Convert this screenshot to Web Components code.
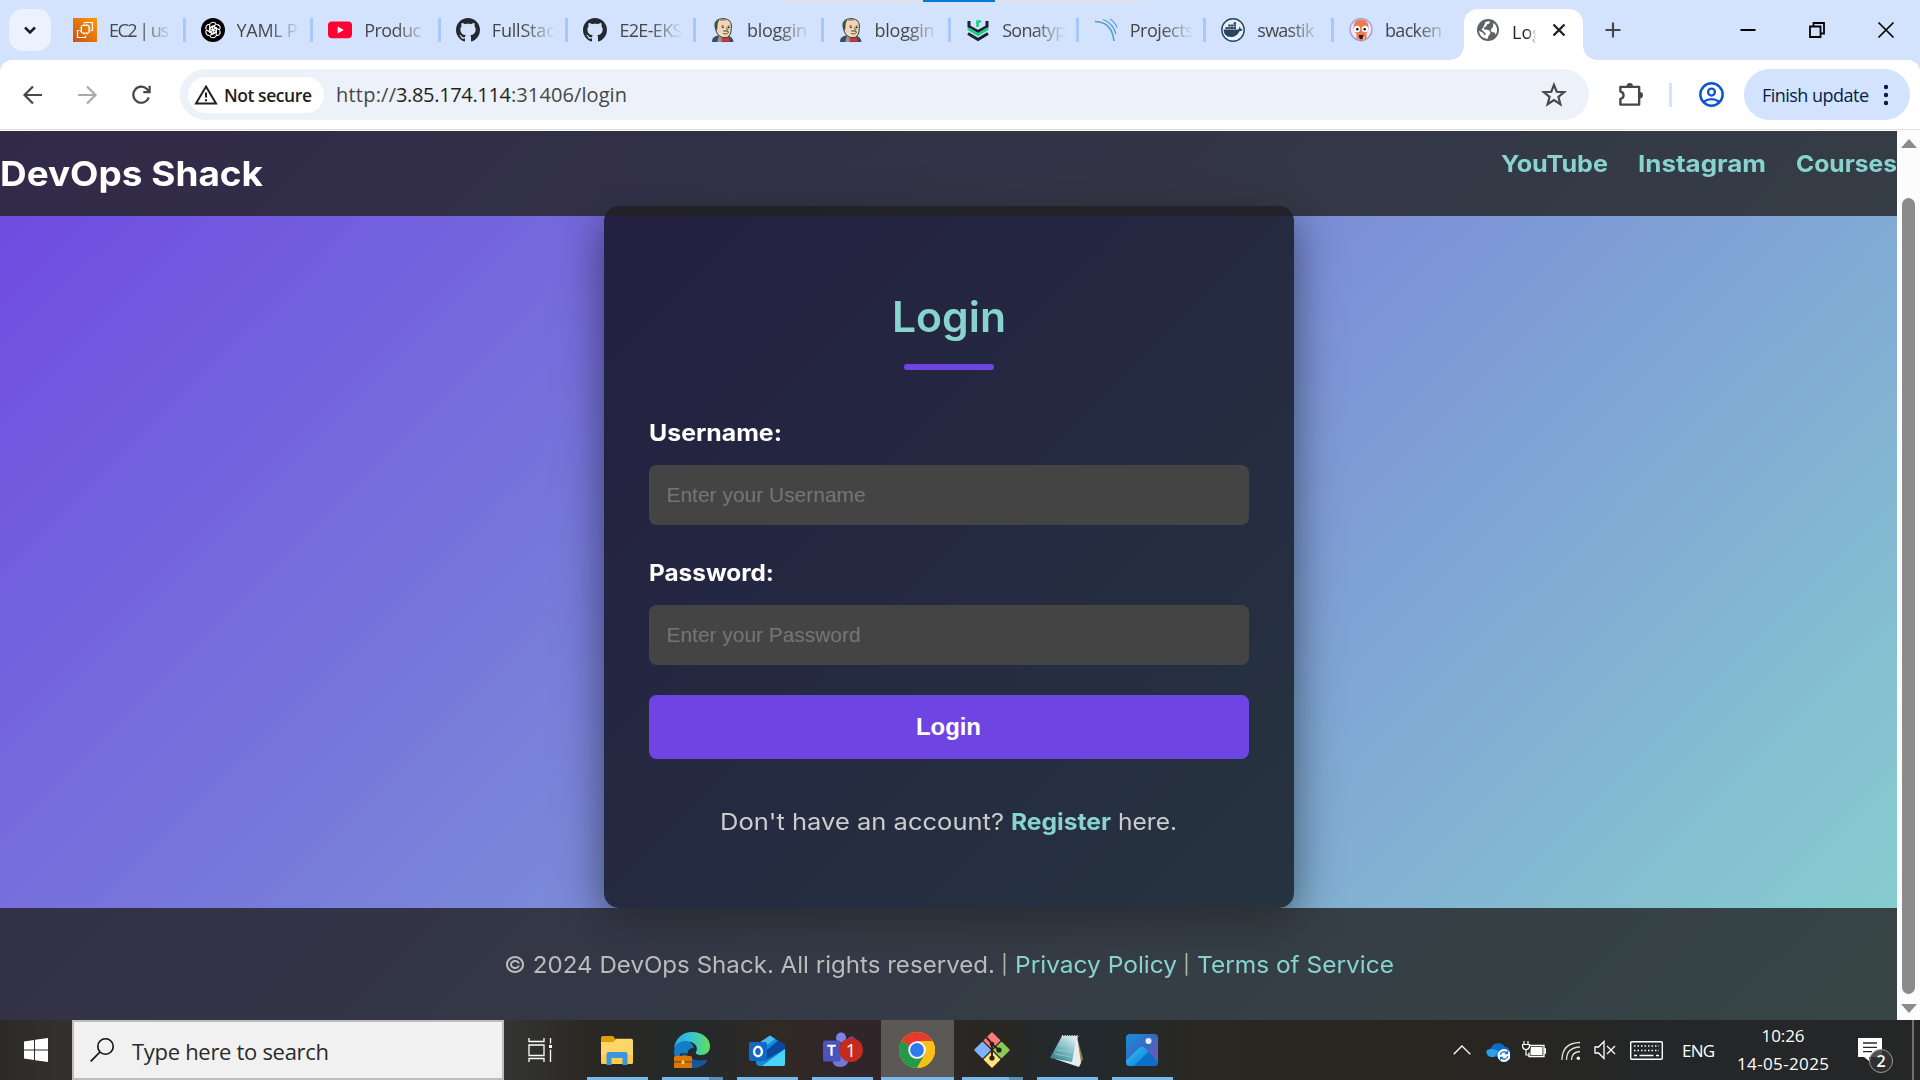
<!DOCTYPE html>
<html lang="en">
<head>
<meta charset="utf-8">
<title>Login</title>
<style>
html,body{margin:0;height:100%;overflow:hidden;background:#fff}
body{font-family:"Open Sans","Noto Sans",sans-serif}
</style>
</head>
<body>
<desktop-screen></desktop-screen>
<script>
const ICONS = {
down:['0 0 24 24','<path d="M6 9l6 6 6-6" fill="none" stroke="#1f1f1f" stroke-width="3"/>'],
ec2:['0 0 24 24','<defs><linearGradient id="g" x1="0" y1="1" x2="1" y2="0"><stop stop-color="#c8511b"/><stop offset="1" stop-color="#f90"/></linearGradient></defs><path fill="url(#g)" d="M0 0h24v24H0z"/><g fill="none" stroke="#fff" stroke-width="1.2"><rect x="8.500" y="7.500" width="7.500" height="7.500" rx="1"/><path d="M11 7.500V6M13.800 7.500V6M11 15v1.500M13.800 15v1.500M8.500 10H7M8.500 12.800H7M16 10h1.500M16 12.800h1.500M11.500 5.500v-1h8v8h-1.500M6.500 12.500h-2v7h8v-2"/></g>'],
gpt:['0 0 24 24','<circle cx="12" cy="12" r="12"/><g fill="none" stroke="#fff" stroke-width="1.150"><path d="M12 8.200l3.400 2v4.300M9.300 5.800a3.300 3.300 0 0 1 5.900.6l-3.600 2.100v4"/><path d="M12 8.200l3.400 2v4.300M9.300 5.800a3.300 3.300 0 0 1 5.900.6l-3.600 2.100v4" transform="rotate(60 12 12)"/><path d="M12 8.200l3.400 2v4.300M9.300 5.800a3.300 3.300 0 0 1 5.900.6l-3.600 2.100v4" transform="rotate(120 12 12)"/><path d="M12 8.200l3.400 2v4.300M9.300 5.800a3.300 3.300 0 0 1 5.900.6l-3.600 2.100v4" transform="rotate(180 12 12)"/><path d="M12 8.200l3.400 2v4.300M9.300 5.800a3.300 3.300 0 0 1 5.900.6l-3.600 2.100v4" transform="rotate(240 12 12)"/><path d="M12 8.200l3.400 2v4.300M9.300 5.800a3.300 3.300 0 0 1 5.900.6l-3.600 2.100v4" transform="rotate(300 12 12)"/></g>'],
yt:['0 0 24 24','<rect y="3.500" width="24" height="16.800" rx="4" fill="#ff0033"/><path d="M9.700 8.400v7l6-3.500z" fill="#fff"/>'],
gh:['0 0 16 16','<path fill="#24292f" d="M8 0C3.580 0 0 3.580 0 8c0 3.540 2.290 6.530 5.470 7.590.4.070.550-.170.550-.380 0-.190-.010-.820-.010-1.490-2.010.370-2.530-.490-2.690-.940-.090-.230-.480-.940-.820-1.130-.280-.150-.680-.520-.010-.530.630-.010 1.080.580 1.230.820.720 1.210 1.870.870 2.330.660.070-.520.280-.870.510-1.070-1.780-.2-3.640-.890-3.640-3.950 0-.870.310-1.590.820-2.150-.080-.2-.360-1.020.080-2.120 0 0 .670-.210 2.200.820.640-.180 1.320-.270 2-.270s1.360.090 2 .270c1.530-1.040 2.200-.820 2.200-.820.440 1.100.160 1.920.080 2.120.510.560.820 1.270.820 2.150 0 3.070-1.870 3.750-3.650 3.950.290.250.540.730.540 1.480 0 1.070-.010 1.930-.010 2.200 0 .210.150.460.550.380A8.010 8.010 0 0 0 16 8c0-4.420-3.580-8-8-8z"/>'],
jenkins:['0 0 24 24','<path d="M1 24c0-3 1-5 4-6l4-1 9 1c3 1 4 3 4.500 6z" fill="#335061"/><path d="M5.500 14L4 8Q3 1 12 .6q8 0 8.500 7.500l-.6 6q-1 5-5 5.500-7 .5-9.400-5.600z" fill="#f0d6b7" stroke="#3b3b3b" stroke-width="1"/><path d="M4.700 13Q1.500 3.500 8.500 1.400l-1.800 4-.4 5.600z" fill="#49494a"/><path d="M9.500 2.300q3-1 5 0M10 8.300q1.500-1.400 3 0M16.500 8.300q1.300-1 2.600 0M15.500 9l1 3M12 15.500q3 1.500 6-1" stroke="#555" stroke-width=".9" fill="none"/><path d="M12.500 13.300q2.500-1.400 5 .4" stroke="#6d6b6d" stroke-width="1.500" fill="none"/><circle cx="11.900" cy="9.500" r=".8"/><circle cx="17.700" cy="9.500" r=".8"/><path d="M8 18l5 3-2 3H6z" fill="#f7e4cd" opacity=".5"/><path d="M10.500 19l3.500 1.500 4-1.500v5l-4-1.300-3.500 1.300z" fill="#d33833"/>'],
sona:['0 0 24 24','<g fill="none" stroke-width="3"><path d="M3 3v5.500l9 5 9-5V3" stroke="#1b1f33"/><path d="M2 10.500l10 6 10-6" stroke="#1ccf7f"/><path d="M2 15.500l10 6 10-6" stroke="#1b1f33"/><path d="M11.500 9V3.500h3.500" stroke="#1ccf7f" stroke-width="2.600"/></g>'],
sonar:['0 0 24 24','<g fill="none" stroke="#549dd0"><path d="M1 3.500Q18 4 20 23" stroke-width="1.700"/><path d="M9 1.500Q19 5 22 16" stroke-width="1.300"/><path d="M16 1Q21 4 23 9.500" stroke-width="1.100"/></g>'],
docker:['0 0 24 24','<circle cx="12" cy="12" r="11.200" fill="#e9f0fb" stroke="#24475d" stroke-width="1.400"/><path fill="#24475d" d="M2.500 11.500h15q1-1 .8-3 1.500 1 1.500 2.500 1 0 2 .4-1 1.900-3.300 1.800Q15.500 19.300 9.500 19 3 18.600 2.500 11.500z"/><path fill="#24475d" d="M4.500 9h2.400v2H4.500zM7.200 9h2.400v2H7.200zM9.900 9h2.400v2H9.900zM12.600 9H15v2h-2.400zM7.200 6.600h2.400v2H7.200zM9.900 6.600h2.400v2H9.900zM12.600 6.600H15v2h-2.400zM12.600 4.200H15v2h-2.400z"/>'],
argo:['0 0 24 24','<circle cx="12" cy="11.500" r="11" fill="#e8eafb" stroke="#a79ad9" stroke-width="1.300"/><path d="M4.500 9.500q0-8 7.500-8t7.500 8q0 4-2 6v5q-1 3-2.200 1v-3h-1v4q-1.800 2-3.600 0v-4h-1v3q-1.200 2-2.200-1v-5q-3-2-3-6z" fill="#ef7b4d"/><circle cx="8" cy="11" r="3.200" fill="#fff"/><circle cx="16" cy="11" r="3.200" fill="#fff"/><circle cx="8.300" cy="11.200" r="1.200"/><circle cx="15.700" cy="11.200" r="1.200"/><path d="M9.500 17h5l-1 4h-3z" fill="#1d1d2b"/>'],
globe:['0 0 24 24','<circle cx="12" cy="12" r="11" fill="#5f6368"/><path fill="#fff" d="M14 3.300c-.3 2.200-1 2.700-3 3-.4 1.900-.9 2.700-2.900 2.900v2.300c4.600 0 6.400 1 6.200 3.700-.2 1.600-2.400 1.600-2.300 5.500C6 20.700 3.300 17 3.100 12.500c2.500 2.200 4.400 1.900 4.900 4 .6 1.200 1.600.7 1.900-.8L5.500 11.500C7 11 9 5.500 9.500 3.800zM17.500 5c2.200 1.500 3.500 4 3.500 7 0 1.800-.5 3.500-1.400 4.900-.2-1.800-.9-2.500-2.400-2.600-1.700-.1-2.400-.9-2.300-2.500.2-1.800 1.800-1.600 2-3.100z"/>'],
x:['0 0 24 24','<path d="M6.500 6.500l11 11m0-11l-11 11" stroke="#1f1f1f" stroke-width="2.300"/>'],
plus:['0 0 24 24','<path d="M12 4.500v15M4.500 12h15" stroke="#474747" stroke-width="2.200"/>'],
min:['0 0 24 24','<path d="M4.500 12h15" stroke="#000" stroke-width="2"/>'],
restore:['0 0 24 24','<path d="M5 8.500h10.500V19H5zM8.500 8.500V5H19v10.500h-3.500" stroke="#000" stroke-width="1.800" fill="none"/>'],
close:['0 0 24 24','<path d="M4.500 4.500l15 15m0-15l-15 15" stroke="#000" stroke-width="1.700"/>'],
back:['0 0 24 24','<path d="M21 12H4M12 3.500L3.500 12l8.500 8.500" stroke="#474747" stroke-width="2.200" fill="none"/>'],
fwd:['0 0 24 24','<path d="M3 12h17M12 3.500l8.500 8.500-8.500 8.500" stroke="#ababab" stroke-width="2.200" fill="none"/>'],
reload:['0 0 24 24','<path d="M19.800 14.500a8 8 0 1 1-1.700-8.300L20.500 8.600M20.600 2.800v6.300h-6.300" stroke="#474747" stroke-width="2.200" fill="none"/>'],
warn:['0 0 24 24','<path d="M12 3.600L22 20.500H2z" stroke="#1f1f1f" stroke-width="2" fill="none"/><path d="M12 9.500v5m0 1.700v2" stroke="#1f1f1f" stroke-width="2"/>'],
star:['0 0 24 24','<path d="M12 2.600l2.500 6.400 6.900.4-5.300 4.400 1.800 6.700L12 16.700l-5.900 3.800 1.800-6.700-5.300-4.400 6.900-.4z" stroke="#474747" stroke-width="2" fill="none"/>'],
ext:['0 0 24 24','<path d="M2.300 4.700h18v17h-18v-5.500q3-.5 3-3.500t-3-3.500z" fill="none" stroke="#474747" stroke-width="2.300" stroke-linejoin="round"/><path d="M8.300 4a3 3 0 0 1 6 0zM21 9.700a3 3 0 0 1 0 6z" fill="#474747"/>'],
user:['0 0 24 24','<circle cx="12" cy="12" r="10.700" fill="none" stroke="#0b57d0" stroke-width="2.400"/><circle cx="12" cy="9.700" r="3.300" fill="none" stroke="#0b57d0" stroke-width="2.200"/><path d="M4.500 19q7.500-5 15 0" fill="none" stroke="#0b57d0" stroke-width="2.200"/>'],
dots:['0 0 6 24','<g fill="#041e49"><circle cx="3" cy="4" r="2.200"/><circle cx="3" cy="12" r="2.200"/><circle cx="3" cy="20" r="2.200"/></g>'],
win:['0 0 24 24','<path fill="#fff" d="M0 3.500l10-1.500v9.400H0zM11 1.800L24 0v11.400H11zM0 12.500h10V22L0 20.500zM11 12.500h13V24l-13-1.800z"/>'],
search:['0 0 24 24','<circle cx="15.500" cy="8.500" r="7.700" fill="none" stroke="#111" stroke-width="1.600"/><path d="M10 14L.7 23.300" stroke="#111" stroke-width="1.700"/>'],
task:['0 0 24 24','<path d="M1 0v3.500h15V0M1 24v-3.500h15V24M1 7h15v10.500H1zM22.500 0v5.500M22.500 11.500V24" fill="none" stroke="#fff" stroke-width="1.300"/><path d="M21 7h3v3h-3z" fill="#fff"/>'],
folder:['0 0 36 36','<path d="M2 6q0-2 2-2h10l2.500 3-2.500 4H2z" fill="#e09c0b"/><path d="M2 10h12l3-3.300h15q2 0 2 2V30q0 2-2 2H4q-2 0-2-2z" fill="#ffd667"/><path d="M2 23h32v7q0 2-2 2H4q-2 0-2-2z" fill="#ffcb4a"/><path d="M7.500 33V22q0-2 2-2h17q2 0 2 2v11h-5v-7h-11v7z" fill="#3b97dd"/>'],
edge:['0 0 36 36','<defs><linearGradient id="a"><stop stop-color="#2ba8e4"/><stop offset=".5" stop-color="#34c6d2"/><stop offset="1" stop-color="#65e054"/></linearGradient></defs><path d="M0 17C1 6 9 0 18 0c11 0 18 7 18 14 0 6-4 9-9 9-4 0-6-1.500-5-3 2-3 1-8-5-10C9 8 2 11 0 17z" fill="url(#a)"/><path d="M0 19C1 12 7 8 13 9.500c5 1 7 4 6.500 7-5-1-7 4-5 9C17 32 24 33 33 29 28 36 19 37 12 35 5 32 0 27 0 19z" fill="#137dc8"/><path d="M14.500 22c1 5 8 8 19 5.500C29 34 23 37 17 36z" fill="#17559f"/><path d="M7 24v-2h7v2" stroke="#54250a" stroke-width="1.600" fill="none"/><rect y="24" width="18" height="12" rx="1.500" fill="#d87909"/><path d="M0 29h18v1.600H0z" fill="#985007"/><path d="M7.700 28.500h2.600v3.500H7.700z" fill="#ffd33b"/>'],
outlook:['0 0 36 36','<path d="M7 13L21 3.500 36 13v19q0 2-2 2H11q-4 0-4-4z" fill="#168bd8"/><path d="M7 13L21 3.500l5 3.500L9 20z" fill="#45bceb"/><path d="M13 22L29 8.500 36 13v4L17 28z" fill="#0b479e"/><path d="M36 17v15q0 2-2 2H13z" fill="#4bd4f9"/><rect y="10" width="18" height="19" rx="2" fill="#1268c4"/><ellipse cx="9" cy="19.500" rx="3.900" ry="4.700" fill="none" stroke="#fff" stroke-width="2.400"/>'],
teams:['0 0 40 40','<circle cx="19" cy="7" r="5.300" fill="#7b83eb"/><circle cx="30" cy="9.500" r="3.800" fill="#5059c9"/><path d="M24 16h11v10q0 6-6 6h-5z" fill="#5059c9"/><path d="M10 16h17v14q-1 8-9 8t-8-8z" fill="#7276d8"/><rect y="10" width="18.500" height="22" rx="2" fill="#4b53bc"/><path d="M4.500 15.500h9M9 15v11" stroke="#fff" stroke-width="2.300"/>'],
chrome:['0 0 36 36','<circle cx="18" cy="18" r="18" fill="#fbc016"/><path d="M18 18L2.400 9A18 18 0 0 1 33.600 9z" fill="#e33b2e"/><path d="M2.400 9A18 18 0 0 0 18 36l7.800-13.500L18 18z" fill="#229a48"/><path d="M18 9h15.600A18 18 0 0 1 18 36l7.800-13.500z" fill="#fbc016"/><circle cx="18" cy="18" r="8.700" fill="#fff"/><circle cx="18" cy="18" r="6.900" fill="#2f7af0"/>'],
git:['0 0 36 36','<g stroke-width="1.600" stroke-linejoin="round"><path d="M18 1l7.500 7.500L18 16l-7.500-7.500z" fill="#ff7b7b" stroke="#ff7b7b"/><path d="M35 18l-7.500 7.500L20 18l7.500-7.500z" fill="#8acb56" stroke="#8acb56"/><path d="M18 35l-7.500-7.500L18 20l7.500 7.500z" fill="#ffe27a" stroke="#ffe27a"/><path d="M1 18l7.500-7.500L16 18l-7.500 7.500z" fill="#80b3ff" stroke="#80b3ff"/></g><path d="M12.500 5.500l5.500 6v15M18 12l7 6" stroke="#2a2119" stroke-width="1.900" fill="none"/><circle cx="18" cy="12" r="2.300" fill="#2a2119"/><circle cx="25" cy="18" r="2.600" fill="#2a2119"/><circle cx="18" cy="26" r="2.600" fill="#2a2119"/>'],
note:['0 0 36 36','<path d="M28 5l6 22-3 5-5-3z" fill="#a77a3f"/><path d="M28 4l4 27-2 4L6 27z" fill="#e7edef"/><defs><linearGradient id="n" x1="0" y1="1" x2=".8" y2="0"><stop stop-color="#2b707d"/><stop offset=".5" stop-color="#6fb3bd"/><stop offset="1" stop-color="#dceff1"/></linearGradient></defs><path d="M13 4h15l-5 26-22-4z" fill="url(#n)"/><path d="M13 4.500h17" stroke="#ddd" stroke-width="3" stroke-dasharray="1.200 1.200"/><path d="M10 13l14 1M8 18l15 2M6 22l16 3" stroke="#a6d2d8" stroke-width=".7"/>'],
photos:['0 0 36 36','<defs><linearGradient id="h" x1="0" y1="0" x2="1" y2="1"><stop stop-color="#1590df"/><stop offset=".5" stop-color="#3869be"/><stop offset="1" stop-color="#8c50b4"/></linearGradient><linearGradient id="i" x1="0" y1="0" x2="1" y2="1"><stop stop-color="#36c8f6"/><stop offset="1" stop-color="#0c74d4"/></linearGradient></defs><rect x="2" y="2" width="32" height="32" rx="4" fill="url(#h)"/><path d="M5 31L15 16.500q3-2.500 6 0l13 12.700V30q0 4-4 4H6q-4 0-4-4z" fill="#0a6ecb"/><path d="M2 28.500L15 16q3-2.500 6 0l3.500 3.500L10 34H6q-4 0-4-4z" fill="url(#i)"/><circle cx="24.500" cy="9" r="3" fill="#e7edfb"/>'],
chev:['0 0 18 10','<path d="M.7 9.300L9 1l8.300 8.300" fill="none" stroke="#fff" stroke-width="1.300"/>'],
cloud:['0 0 24 21','<path d="M5 16a5 5 0 0 1 0-9 8 8 0 0 1 14-1 5 5 0 0 1 3 9z" fill="#0f6cc4"/><path d="M1 9q7-3 12 2l-5 5H5Q0 15 .5 10z" fill="#2f9fe9"/><circle cx="18" cy="14.500" r="6.500" fill="#fff"/><path d="M14.300 14a3.800 3.800 0 0 1 6.800-1.700M21.700 15a3.800 3.800 0 0 1-6.800 1.700M21.500 10v2.600h-2.600M14.500 19v-2.600h2.600" fill="none" stroke="#1878cf" stroke-width="1.300"/>'],
batt:['0 0 24 18','<path d="M8 4.500h14v11H7v-4M22.500 8h1v4h-1" fill="none" stroke="#fff" stroke-width="1.300"/><path d="M9 6h11.500v8H8.500V9z" fill="#fff"/><path d="M2 0v3M6 0v3M.6 3.500h6.800v2.500q-.8 2.500-3.400 2.500T.6 6zM4 8.500V14h3" fill="none" stroke="#fff" stroke-width="1.200"/>'],
wifi:['0 0 20 20','<g fill="none" stroke="#ddd" stroke-width="1.300"><path d="M1 19Q1 2 19 1.500M5.500 19Q5.500 6.500 19 6M10.500 19q0-8 8.500-8.500"/></g><circle cx="17.300" cy="17.300" r="1.700" fill="#fff"/>'],
mute:['0 0 22 20','<path d="M1 7h3.500L10 1.500v17L4.500 13H1z" fill="none" stroke="#fff" stroke-width="1.300"/><path d="M13 6l8 8m0-8l-8 8" stroke="#fff" stroke-width="1.300"/>'],
kbd:['0 0 33 19','<rect x=".7" y=".7" width="31.600" height="17.600" rx="1" fill="none" stroke="#fff" stroke-width="1.400"/><path d="M4 5h25M4 9.500h25" stroke="#fff" stroke-width="1.400" stroke-dasharray="1.500 2"/><path d="M4 14.500h3M9.500 14.500h14M26 14.500h3" stroke="#fff" stroke-width="1.400"/>'],
note2:['0 0 36 36','<path d="M0 0h24v19H11v4l-5-4H0z" fill="#fff"/><path d="M5 5h14M5 9.300h14M5 13.600h9" stroke="#272727" stroke-width="1.300"/>'],
up:['0 0 16 9','<path d="M8 0l8 9H0z" fill="#8b8b8b"/>'],
dn:['0 0 16 9','<path d="M8 9l8-9H0z" fill="#8b8b8b"/>']
};
function define(name, html, setup){
  customElements.define(name, class extends HTMLElement{
    constructor(){
      super();
      const t = document.createElement('template');
      t.innerHTML = html;
      this.attachShadow({mode:'open'}).appendChild(t.content.cloneNode(true));
    }
    connectedCallback(){ if(setup) setup(this, this.shadowRoot); }
  });
}
define('ui-icon','<style>:host{display:block;flex:none}svg{display:block;width:100%;height:100%}</style><svg></svg>',(el,r)=>{
  const [box,body] = ICONS[el.getAttribute('name')];
  const [w,h] = (el.getAttribute('size')||'24').split(' ');
  el.style.width = w+'px'; el.style.height = (h||w)+'px';
  const svg = r.querySelector('svg');
  svg.setAttribute('viewBox',box); svg.innerHTML = body;
});
/* A single line of text brought to a given width: by tracking, or by widening its letters when "wide" is set */
define('fit-text','<style>:host{display:block;flex:none;white-space:pre}span{display:inline-block;transform-origin:0 50%}</style><span></span>',(el,r)=>{
  const s = r.querySelector('span'), txt = el.getAttribute('text'), w = +el.getAttribute('w');
  s.textContent = txt;
  const nat = s.getBoundingClientRect().width;
  if(el.hasAttribute('wide')) s.style.transform = `scaleX(${(w/nat).toFixed(4)})`;
  else s.style.letterSpacing = ((w-nat)/Math.max(1,txt.length-1)).toFixed(3)+'px';
  el.style.width = w+'px';
});
define('browser-tab',`<style>
:host{display:flex;flex:none;box-sizing:border-box;width:127.600px;height:24px;padding-left:15px;align-items:center;border-right:3px solid #a8c7fa;color:#474747}
:host([last]){border-color:transparent}
.i{margin-right:12px}
.t{width:66px;overflow:hidden;line-height:26px;height:26px;font-size:18px;-webkit-mask-image:linear-gradient(90deg,#000 48%,transparent 96%);mask-image:linear-gradient(90deg,#000 48%,transparent 96%)}
</style><div class="i"></div><div class="t"></div>`,(el,r)=>{
  r.querySelector('.i').innerHTML = `<ui-icon name="${el.getAttribute('icon')}"></ui-icon>`;
  r.querySelector('.t').innerHTML = `<fit-text text="${el.getAttribute('label')}" w="${el.getAttribute('w')}"></fit-text>`;
});
define('tab-strip',`<style>
:host{display:flex;height:60px;background:#d3e3fd;box-sizing:border-box;position:relative}
.drop{width:42px;height:42px;margin:9px 7px 0 9px;border-radius:14px;background:#ebf2fe;display:flex;align-items:center;justify-content:center}
.tabs{display:flex;padding-top:18px}
.active{margin-left:2.500px;width:119px;height:51px;margin-top:9px;background:#fff;border-radius:14px 14px 0 0;display:flex;align-items:center;box-sizing:border-box;padding:0 0 9px 12px;position:relative;color:#1f1f1f}
.active:before,.active:after{content:"";position:absolute;bottom:0;width:14px;height:14px}
.active:before{left:-14px;background:radial-gradient(circle at 0 0,transparent 13.500px,#fff 14px)}
.active:after{right:-14px;background:radial-gradient(circle at 100% 0,transparent 13.500px,#fff 14px)}
.l{width:30px;margin:3px 5px 0 12px;font-size:18px;line-height:26px;-webkit-mask-image:linear-gradient(90deg,#000 50%,transparent 82%);mask-image:linear-gradient(90deg,#000 50%,transparent 82%)}
.plus{margin:18px 0 0 18px}
.win{margin:18px 22.500px 0 auto;display:flex;gap:45px}
.load{position:absolute;left:779px;top:0;width:362px;height:2px;background:linear-gradient(90deg,#e1e1e1 144px,#0078d7 144px 216px,#e1e1e1 216px)}
</style>
<div class="drop"><ui-icon name="down" size="20"></ui-icon></div>
<div class="tabs">
<browser-tab icon="ec2" label="EC2 | us" w="60"></browser-tab>
<browser-tab icon="gpt" label="YAML P" w="61"></browser-tab>
<browser-tab icon="yt" label="Produc" w="57"></browser-tab>
<browser-tab icon="gh" label="FullStac" w="63"></browser-tab>
<browser-tab icon="gh" label="E2E-EKS" w="63"></browser-tab>
<browser-tab icon="jenkins" label="bloggin" w="60"></browser-tab>
<browser-tab icon="jenkins" label="bloggin" w="60"></browser-tab>
<browser-tab icon="sona" label="Sonatyp" w="64"></browser-tab>
<browser-tab icon="sonar" label="Projects" w="64"></browser-tab>
<browser-tab icon="docker" label="swastik" w="57"></browser-tab>
<browser-tab icon="argo" label="backen" w="57" last></browser-tab>
</div>
<div class="active"><ui-icon name="globe"></ui-icon><div class="l"><fit-text text="Log" w="30"></fit-text></div><ui-icon name="x"></ui-icon></div>
<ui-icon class="plus" name="plus"></ui-icon>
<div class="win"><ui-icon name="min"></ui-icon><ui-icon name="restore"></ui-icon><ui-icon name="close"></ui-icon></div>
<div class="load"></div>`);
define('tool-bar',`<style>
:host{display:block;height:71px;background:#d3e3fd}
.bar{display:flex;align-items:center;height:71px;box-sizing:border-box;padding:0 10px 2px 21px;background:#fff;border-radius:12px 12px 0 0;box-shadow:inset 0 -1px #fff,inset 0 -2px #e0e0e0}
.nav{display:flex;gap:30px;width:159px}
.omni{flex:1;height:51px;border-radius:26px;background:#ecf1fa;display:flex;align-items:center;box-sizing:border-box;padding:0 22px 0 8px}
.chip{height:36px;width:136px;border-radius:18px;background:#fff;display:flex;align-items:center;gap:6px;padding-left:6px;box-sizing:border-box;font-size:17.500px;font-weight:600;color:#1f1f1f}
.url{display:flex;font-size:20px;color:#474747;margin-left:12px}
.url .h{color:#1f1f1f}
.star{margin-left:auto}
.ext{margin:0 26px 0 29px}
.sep{width:3px;height:24px;background:#d3e3fd;margin-right:27px}
.upd{margin-left:20px;width:166px;height:51px;border-radius:26px;background:#d3e3fd;display:flex;align-items:center;gap:14px;padding-left:18px;box-sizing:border-box;color:#041e49;font-size:18px}
</style><div class="bar">
<div class="nav"><ui-icon name="back"></ui-icon><ui-icon name="fwd"></ui-icon><ui-icon name="reload"></ui-icon></div>
<div class="omni"><div class="chip"><ui-icon name="warn"></ui-icon><fit-text text="Not secure" w="88"></fit-text></div>
<div class="url"><fit-text text="http://" w="60"></fit-text><fit-text class="h" text="3.85.174.114" w="115"></fit-text><fit-text text=":31406/login" w="116"></fit-text></div>
<ui-icon class="star" name="star" size="26"></ui-icon></div>
<ui-icon class="ext" name="ext" size="25"></ui-icon><div class="sep"></div><ui-icon name="user" size="25"></ui-icon>
<div class="upd"><fit-text text="Finish update" w="107"></fit-text><ui-icon name="dots" size="6 24"></ui-icon></div>
</div>`);
define('site-header',`<style>
:host{display:flex;justify-content:space-between;align-items:flex-start;height:85px;box-sizing:border-box;padding-top:15px;background:rgba(34,34,34,.8);position:relative;z-index:1;font-weight:650}
h1{margin:0;font-size:34.500px;line-height:55px;font-weight:650;color:#fff}
nav{display:flex;gap:30px;font-size:23.500px;line-height:35px;color:#88d3ce}
</style><h1><fit-text wide text="DevOps Shack" w="263"></fit-text></h1>
<nav><fit-text wide text="YouTube" w="107"></fit-text><fit-text wide text="Instagram" w="128"></fit-text><fit-text wide text="Courses" w="101"></fit-text></nav>`);
define('form-field',`<style>
:host{display:block;margin-bottom:30px}
label{display:block;line-height:36px;font-size:23px;font-weight:650;color:#fff;margin-bottom:14px}
.in{height:60px;border-radius:7.500px;background:#444;box-sizing:border-box;padding-left:18px;font:20.800px/60px "Liberation Sans",Arial,sans-serif;color:#757575}
</style><label></label><div class="in"></div>`,(el,r)=>{
  const a=n=>el.getAttribute(n);
  r.querySelector('label').innerHTML=`<fit-text wide text="${a('label')}" w="${a('lw')}"></fit-text>`;
  r.querySelector('.in').innerHTML=`<fit-text text="${a('hint')}" w="${a('hw')}"></fit-text>`;
});
define('login-card',`<style>
:host{display:block;width:690px;height:702px;margin-top:-10px;box-sizing:border-box;padding:81px 45px 0;border-radius:15px;background:rgba(0,0,0,.7);box-shadow:0 12px 45px rgba(0,0,0,.5)}
h2{margin:0;display:flex;justify-content:center;font-size:42px;line-height:60px;font-weight:600;color:#88d3ce}
.rule{width:90px;height:6px;border-radius:3px;background:#6e45e2;margin:17px auto 45px}
.btn{height:64px;border-radius:7.500px;background:#6e45e2;color:#fff;display:flex;justify-content:center;font:bold 24px/64px "Liberation Sans",Arial,sans-serif}
p{margin:45px 0 0;display:flex;justify-content:center;gap:7px;font-size:23.500px;line-height:36px;color:#ccc}
b{font-weight:650;color:#88d3ce}
</style><h2><fit-text wide text="Login" w="114"></fit-text></h2><div class="rule"></div>
<form-field label="Username:" lw="133" hint="Enter your Username" hw="199"></form-field>
<form-field label="Password:" lw="125" hint="Enter your Password" hw="194"></form-field>
<div class="btn"><fit-text text="Login" w="65"></fit-text></div>
<p><fit-text wide text="Don't have an account?" w="284"></fit-text><b><fit-text wide text="Register" w="100"></fit-text></b><fit-text wide text="here." w="59"></fit-text></p>`);
define('site-footer',`<style>
:host{display:flex;height:112px;align-items:center;justify-content:center;gap:8px;padding-top:2px;box-sizing:border-box;background:rgba(34,34,34,.8);position:relative;z-index:1;font-size:23.500px;line-height:36px;color:#bbb}
.a{color:#88d3ce}
.p{font:19px/36px Inter,sans-serif;display:flex;width:4px;justify-content:center}
</style><fit-text wide text="© 2024 DevOps Shack. All rights reserved." w="491"></fit-text><span class="p">|</span><fit-text wide class="a" text="Privacy Policy" w="162"></fit-text><span class="p">|</span><fit-text wide class="a" text="Terms of Service" w="197"></fit-text>`);
define('page-view',`<style>
:host{display:flex;height:889px;overflow:hidden}
.doc{width:1897px;height:889px;display:flex;flex-direction:column;font-family:Inter,"Open Sans",sans-serif;background:linear-gradient(135deg,#6e45e2,#88d3ce) 0 -54px/1897px 957px no-repeat}
main{height:692px;display:flex;justify-content:center;align-items:flex-start}
.sb{width:23px;background:#fcfcfc;display:flex;flex-direction:column;align-items:center;box-sizing:border-box;padding:8px 0 7px}
.th{width:13px;height:796px;border-radius:7px;background:#8b8b8b;margin:50px 0 auto}
</style><div class="doc"><site-header></site-header><main><login-card></login-card></main><site-footer></site-footer></div>
<div class="sb"><ui-icon name="up" size="16 9"></ui-icon><div class="th"></div><ui-icon name="dn" size="16 9"></ui-icon></div>`);
define('task-button',`<style>
:host{display:flex;flex:none;width:75px;height:60px;flex-direction:column;align-items:center;justify-content:space-between;position:relative}
:host([on]) .box{background:#5b5855}
.box{width:73px;flex:1;display:flex;align-items:center;justify-content:center}
.box{padding:3px 2px 0 0;box-sizing:border-box}
.u{width:61px;height:3px;background:#76b9ed}
:host([on]) .u{width:73px}
:host([multi]) .u{background:linear-gradient(90deg,#76b9ed 47px,#5a8fb8 47px)}
.n{position:absolute;left:34px;top:18px;width:24px;height:24px;padding-top:0;border-radius:50%;background:#c42b1c;color:#fff;font-size:18px;line-height:24px;text-align:center}
</style><div class="box"></div><div class="u"></div>`,(el,r)=>{
  r.querySelector('.box').innerHTML=`<ui-icon name="${el.getAttribute('icon')}" size="${el.getAttribute('size')||36}"></ui-icon>`;
  const n=el.getAttribute('badge');
  if(n){const d=document.createElement('div');d.className='n';d.textContent=n;r.appendChild(d);}
});
define('task-bar',`<style>
:host{display:flex;height:60px;align-items:center;background:linear-gradient(90deg,#2c2a28 0,#33302d 60px,#343535 500px,#2a2823 590px,#25292b 700px,#302a24 775px,#32252a 850px,#292722 990px,#222a30 1080px,#292822 1200px,#282620 1400px,#262626 1600px,#24272a 1700px,#262626 1920px);color:#fff}
.start{padding:0 24px}
.s{width:432px;height:60px;box-sizing:border-box;border:2px solid #bdbdbd;background:#f1f1f1;display:flex;align-items:center;padding-left:16px;gap:18px;font-size:22px;color:#2a2a2a}
.s fit-text{margin-top:1px}
.tv{margin:0 28px 0 24px}
.apps{display:flex}
.tray{display:flex;align-items:center;margin-left:auto;font-size:17px}
.clock{display:flex;flex-direction:column;align-items:center;margin-left:22px;width:92px;line-height:28px;height:56px}
.nt{position:relative;margin-left:29px;width:36px;height:36px;margin-top:12px}
.bd{position:absolute;left:11px;top:11px;width:22px;height:22px;border:1px solid #9b9b9b;border-radius:50%;background:rgba(50,50,50,.85);font-size:16px;font-weight:600;line-height:22px;text-align:center}
.end{width:2px;height:60px;background:#707070;margin:0 6px 0 18px}
</style>
<div class="start"><ui-icon name="win"></ui-icon></div>
<div class="s"><ui-icon name="search"></ui-icon><fit-text text="Type here to search" w="197"></fit-text></div>
<ui-icon class="tv" name="task"></ui-icon>
<div class="apps">
<task-button icon="folder"></task-button><task-button icon="edge" multi></task-button><task-button icon="outlook"></task-button><task-button icon="teams" size="38" badge="1"></task-button><task-button icon="chrome" on></task-button><task-button icon="git" multi></task-button><task-button icon="note"></task-button><task-button icon="photos"></task-button></div>
<div class="tray">
<ui-icon name="chev" size="18 10"></ui-icon>
<ui-icon name="cloud" size="24 21" style="margin:2px 0 0 15px"></ui-icon>
<ui-icon name="batt" size="24 18" style="margin-left:12px"></ui-icon>
<ui-icon name="wifi" size="20" style="margin:2px 0 0 15px"></ui-icon>
<ui-icon name="mute" size="22 20" style="margin-left:13px"></ui-icon>
<ui-icon name="kbd" size="33 19" style="margin-left:14px"></ui-icon>
<fit-text text="ENG" w="33" style="margin:1px 0 0 19px"></fit-text>
<div class="clock"><fit-text text="10:26" w="43"></fit-text><fit-text text="14-05-2025" w="92"></fit-text></div>
<div class="nt"><ui-icon name="note2" size="36"></ui-icon><div class="bd">2</div></div>
<div class="end"></div>
</div>`);
define('desktop-screen',`<style>:host{display:flex;flex-direction:column;width:1920px;height:1080px;overflow:hidden}</style><tab-strip></tab-strip><tool-bar></tool-bar><page-view></page-view><task-bar></task-bar>`);
</script>
</body>
</html>
